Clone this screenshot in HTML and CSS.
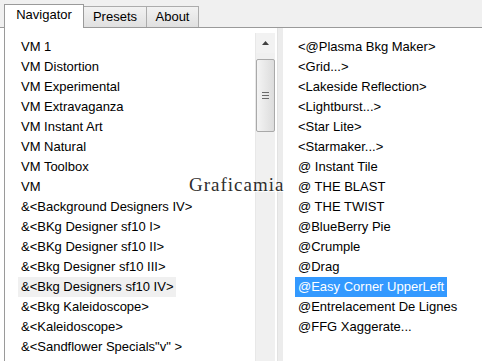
FILE: index.html
```html
<!DOCTYPE html>
<html lang="en">
<head>
    <meta charset="UTF-8">
    <title>Navigator</title>
    <link rel="stylesheet" href="styles.css">
</head>
<body>
    <div class="tabbar">
        <div class="tab active">Navigator</div>
        <div class="tab">Presets</div>
        <div class="tab">About</div>
    </div>

    <div class="panel">
        <ul class="list left">
            <li><span>VM 1</span></li>
            <li><span>VM Distortion</span></li>
            <li><span>VM Experimental</span></li>
            <li><span>VM Extravaganza</span></li>
            <li><span>VM Instant Art</span></li>
            <li><span>VM Natural</span></li>
            <li><span>VM Toolbox</span></li>
            <li><span>VM</span></li>
            <li><span>&amp;&lt;Background Designers IV&gt;</span></li>
            <li><span>&amp;&lt;BKg Designer sf10 I&gt;</span></li>
            <li><span>&amp;&lt;BKg Designer sf10 II&gt;</span></li>
            <li><span>&amp;&lt;Bkg Designer sf10 III&gt;</span></li>
            <li><span class="hover">&amp;&lt;Bkg Designers sf10 IV&gt;</span></li>
            <li><span>&amp;&lt;Bkg Kaleidoscope&gt;</span></li>
            <li><span>&amp;&lt;Kaleidoscope&gt;</span></li>
            <li><span>&amp;&lt;Sandflower Specials"v" &gt;</span></li>
        </ul>

        <div class="scrollbar">
            <div class="sb-btn">
                <svg width="7" height="4" viewBox="0 0 7 4"><path d="M3.5 0 L7 4 L0 4 Z" fill="#404040"/></svg>
            </div>
            <div class="sb-thumb">
                <span class="grip"></span>
            </div>
        </div>
        <div class="splitter"></div>

        <ul class="list right">
            <li><span>&lt;@Plasma Bkg Maker&gt;</span></li>
            <li><span>&lt;Grid...&gt;</span></li>
            <li><span>&lt;Lakeside Reflection&gt;</span></li>
            <li><span>&lt;Lightburst...&gt;</span></li>
            <li><span>&lt;Star Lite&gt;</span></li>
            <li><span>&lt;Starmaker...&gt;</span></li>
            <li><span>@ Instant Tile</span></li>
            <li><span>@ THE BLAST</span></li>
            <li><span>@ THE TWIST</span></li>
            <li><span>@BlueBerry Pie</span></li>
            <li><span>@Crumple</span></li>
            <li><span>@Drag</span></li>
            <li><span class="selected">@Easy Corner UpperLeft</span></li>
            <li><span>@Entrelacement De Lignes</span></li>
            <li><span>@FFG Xaggerate...</span></li>
        </ul>

        <div class="watermark">Graficamia</div>
    </div>
</body>
</html>
```

FILE: styles.css
```css
body {
    margin: 0;
    font-family: "Liberation Sans", Arial, sans-serif;
    font-size: 13px;
    color: #000;
    background-color: #fff;
    overflow: hidden;
}
.tabbar {
    display: flex;
    align-items: flex-end;
    height: 27px;
    padding-left: 4px;
    background-color: #f0f0f0;
    border-bottom: 1px solid #9a9a9a;
}
.tab {
    box-sizing: border-box;
    height: 21px;
    line-height: 19px;
    text-align: center;
    border: 1px solid #acacac;
    border-bottom: none;
    background: linear-gradient(#f2f2f2, #e0e0e0);
}
.tab:nth-child(2) {
    width: 63px;
    border-left: none;
}
.tab:nth-child(3) {
    width: 52px;
    border-left: none;
}
.tab.active {
    width: 80px;
    height: 24px;
    margin-bottom: -1px;
    line-height: 19px;
    background: #fff;
    border-color: #9a9a9a;
}
.panel {
    position: relative;
    display: flex;
    height: 333px;
    margin-left: 4px;
    border-left: 1px solid #9a9a9a;
    background-color: #fff;
}
.list {
    list-style: none;
    margin: 0;
    padding: 9px 0 0 0;
}
.list li {
    height: 20px;
    line-height: 20px;
    white-space: nowrap;
}
.list span {
    display: inline-block;
    padding: 0 3px;
}
.list.left {
    width: 237px;
    padding-left: 13px;
}
.list.right {
    flex: 1;
    padding-left: 12px;
}
.list .hover {
    background-color: #f0f0f0;
}
.list .selected {
    background-color: #3399ff;
    color: #fff;
}
.scrollbar {
    width: 19px;
    margin-top: 5px;
    background-color: #f0f0f0;
    border-left: 1px solid #e8e8e8;
}
.sb-btn {
    display: flex;
    align-items: center;
    justify-content: center;
    height: 20px;
    background-color: #f2f2f2;
}
.sb-thumb {
    display: flex;
    align-items: center;
    justify-content: center;
    box-sizing: border-box;
    height: 73px;
    margin-top: 6px;
    border: 1px solid #a9a9a9;
    border-radius: 2px;
    background: linear-gradient(to right, #f4f4f4, #dcdcdc);
}
.grip {
    width: 7px;
    height: 7px;
    background: repeating-linear-gradient(#6a6a6a 0, #6a6a6a 1px, transparent 1px, transparent 3px);
}
.splitter {
    width: 5px;
    margin-left: 2px;
    background-color: #ececec;
    border-left: 1px solid #e2e2e2;
}
.watermark {
    position: absolute;
    left: 184px;
    top: 146px;
    font-family: "Liberation Serif", "Times New Roman", serif;
    font-size: 19px;
    letter-spacing: 1px;
    color: #2e2e2e;
    text-shadow: 0 0 2px #fff, 1px 1px 0 #fff;
}
```
